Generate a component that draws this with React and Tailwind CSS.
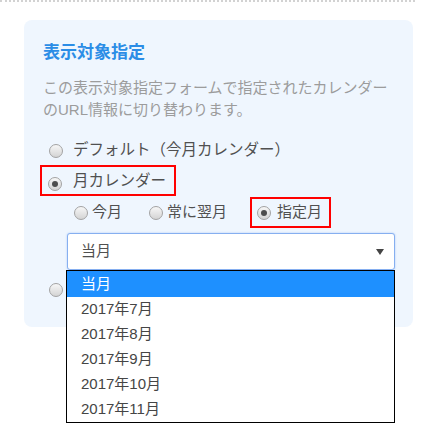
import React from 'react';

function Radio({ checked }) {
    return (
        <span className="relative inline-flex h-[14px] w-[14px] shrink-0 items-center justify-center rounded-full border border-[#a3a3a3] bg-linear-to-b from-[#f7f7f7] to-[#d4d4d4]">
            {checked && <span className="h-[6px] w-[6px] rounded-full bg-[#4d4d4d]" />}
        </span>
    );
}

const months = ['2017年7月', '2017年8月', '2017年9月', '2017年10月', '2017年11月'];

export default function App() {
    return (
        <div className="min-h-[438px] w-[415px] border-t-2 border-dotted border-[#d2d2d2] pt-[18px] font-['Liberation_Sans','Noto_Sans_CJK_JP',sans-serif] text-[#505050]">

            {/* panel */}
            <div className="ml-[24px] w-[389px] rounded-lg bg-[#eff6fe] pl-[19px] pr-[19px] pt-[21px] pb-[24px]">

                <h2 className="text-[17px] font-bold leading-[24px] text-[#2b8de6]">表示対象指定</h2>

                <p className="mt-3 whitespace-nowrap text-[15px] leading-[22px] text-[#9c9c9c]">
                    この表示対象指定フォームで指定されたカレンダー<br />
                    のURL情報に切り替わります。
                </p>

                {/* row 1 */}
                <div className="mt-4 flex h-[26px] items-center pl-[6px] text-[15.5px]">
                    <span className="mt-[5px]"><Radio /></span>
                    <span className="ml-[10px] leading-[26px]">デフォルト（今月カレンダー）</span>
                </div>

                {/* row 2 */}
                <div className="mt-[2px]">
                    <div className="-ml-[3px] inline-flex h-[31px] items-center border-2 border-[#ff0000] pl-[6px] pr-[8px] text-[15.5px]">
                        <span className="mt-[2px]"><Radio checked /></span>
                        <span className="ml-[11px]">月カレンダー</span>
                    </div>
                </div>

                {/* sub options */}
                <div className="mt-[1px] flex h-[31px] items-center pl-[31px] text-[15px]">
                    <div className="flex w-[75px] items-center gap-[4px]">
                        <Radio />
                        <span>今月</span>
                    </div>
                    <div className="flex w-[101px] items-center gap-[4px]">
                        <Radio />
                        <span>常に翌月</span>
                    </div>
                    <div className="inline-flex h-[31px] items-center gap-[6px] border-2 border-[#ff0000] pl-[5px] pr-[7px]">
                        <Radio checked />
                        <span>指定月</span>
                    </div>
                </div>

                {/* select */}
                <div className="relative z-10 ml-[24px] mt-[5px] w-[328px]">
                    <div className="flex h-[37px] items-center justify-between rounded-[3px] border border-[#86aff0] bg-white pl-[13px] pr-[10px] text-[15px] shadow-[0_0_2px_#a9c7f6]">
                        <span>当月</span>
                        <svg width="8" height="6" viewBox="0 0 8 6">
                            <path d="M0 0 L8 0 L4 6 Z" fill="#444" />
                        </svg>
                    </div>

                    {/* open list */}
                    <ul className="absolute left-[-1px] right-0 top-full border border-black bg-white text-[15px]">
                        <li className="flex h-[26px] items-center bg-[#1e90ff] pl-[14px] text-white">当月</li>
                        {months.map((m) => (
                            <li key={m} className="flex h-[25px] items-center pl-[14px] text-[#454545]">{m}</li>
                        ))}
                    </ul>
                </div>

                {/* row 3, label hidden under the open list */}
                <div className="mt-[7px] flex h-[26px] items-center pl-[6px]">
                    <span className="mt-[3px]"><Radio /></span>
                </div>

            </div>
        </div>
    );
}
